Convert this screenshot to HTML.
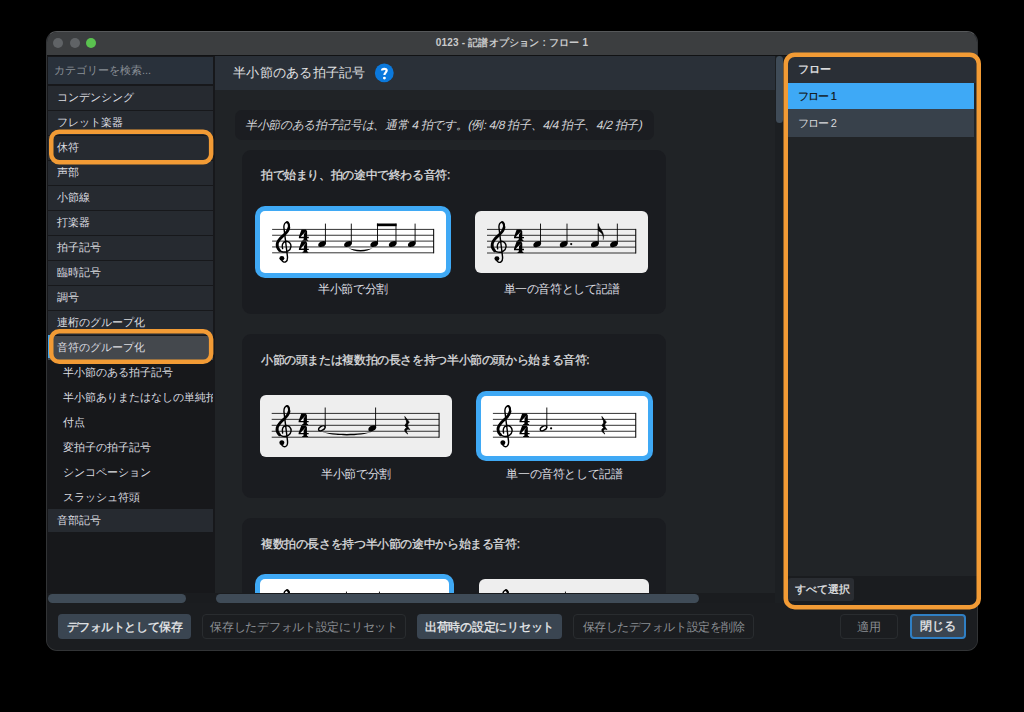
<!DOCTYPE html><html><head><meta charset="utf-8"><style>
*{margin:0;padding:0;box-sizing:border-box}
html,body{width:1024px;height:712px;background:#000;overflow:hidden;font-family:"Liberation Sans",sans-serif;}
.a{position:absolute;white-space:nowrap}
.t{white-space:nowrap}
</style></head><body>
<div class="a" style="left:46px;top:31px;width:932px;height:620px;background:#1b1d20;border-radius:11px;border:1px solid #323436;border-top-color:#56585a"></div>
<div class="a" style="left:47px;top:32px;width:930px;height:23px;background:#3c3e40;border-radius:10px 10px 0 0"></div>
<div class="a" style="left:47px;top:55px;width:930px;height:1px;background:#111214"></div>
<div class="a" style="left:53px;top:38px;width:10px;height:10px;background:#606366;border-radius:50%"></div>
<div class="a" style="left:70px;top:38px;width:10px;height:10px;background:#606366;border-radius:50%"></div>
<div class="a" style="left:86px;top:38px;width:10px;height:10px;background:#5ac24f;border-radius:50%"></div>
<div class="a" style="left:46px;top:36px;width:932px;height:14px;text-align:center;color:#c9cacb;font-size:10px;letter-spacing:0.18px;font-weight:bold;line-height:14px"><span class="t" style="--w:152.33px;">0123 - 記譜オプション : フロー 1</span></div>
<div class="a" style="left:47px;top:56px;width:168px;height:537px;background:#17181b"></div>
<div class="a" style="left:48px;top:57px;width:165px;height:27px;background:#29313b;color:#8a9097;font-size:11px;line-height:27px;padding-left:6px"><span class="t" style="--w:97.17px;">カテゴリーを検索...</span></div>
<div class="a" style="left:48px;top:86px;width:165px;height:24px;background:#262a30;color:#dcdde0;font-size:11px;line-height:23px;padding-left:9px"><span class="t" style="--w:77px;">コンデンシング</span></div>
<div class="a" style="left:48px;top:111px;width:165px;height:24px;background:#262a30;color:#dcdde0;font-size:11px;line-height:23px;padding-left:9px"><span class="t" style="--w:66px;">フレット楽器</span></div>
<div class="a" style="left:48px;top:136px;width:165px;height:24px;background:#262a30;color:#dcdde0;font-size:11px;line-height:23px;padding-left:9px"><span class="t" style="--w:22px;">休符</span></div>
<div class="a" style="left:48px;top:161px;width:165px;height:24px;background:#262a30;color:#dcdde0;font-size:11px;line-height:23px;padding-left:9px"><span class="t" style="--w:22px;">声部</span></div>
<div class="a" style="left:48px;top:186px;width:165px;height:24px;background:#262a30;color:#dcdde0;font-size:11px;line-height:23px;padding-left:9px"><span class="t" style="--w:33px;">小節線</span></div>
<div class="a" style="left:48px;top:211px;width:165px;height:24px;background:#262a30;color:#dcdde0;font-size:11px;line-height:23px;padding-left:9px"><span class="t" style="--w:33px;">打楽器</span></div>
<div class="a" style="left:48px;top:236px;width:165px;height:24px;background:#262a30;color:#dcdde0;font-size:11px;line-height:23px;padding-left:9px"><span class="t" style="--w:44px;">拍子記号</span></div>
<div class="a" style="left:48px;top:261px;width:165px;height:24px;background:#262a30;color:#dcdde0;font-size:11px;line-height:23px;padding-left:9px"><span class="t" style="--w:44px;">臨時記号</span></div>
<div class="a" style="left:48px;top:286px;width:165px;height:24px;background:#262a30;color:#dcdde0;font-size:11px;line-height:23px;padding-left:9px"><span class="t" style="--w:22px;">調号</span></div>
<div class="a" style="left:48px;top:311px;width:165px;height:24px;background:#262a30;color:#dcdde0;font-size:11px;line-height:23px;padding-left:9px"><span class="t" style="--w:88px;">連桁のグループ化</span></div>
<div class="a" style="left:48px;top:336px;width:165px;height:24px;background:#44484d;color:#dcdde0;font-size:11px;line-height:23px;padding-left:9px"><span class="t" style="--w:88px;">音符のグループ化</span></div>
<div class="a" style="left:48px;top:335px;width:2px;height:23px;background:#3fa9f5"></div>
<div class="a" style="left:48px;top:361px;width:165px;height:24px;color:#dcdde0;font-size:11px;line-height:23px;padding-left:15px;overflow:hidden"><span class="t" style="--w:110px;">半小節のある拍子記号</span></div>
<div class="a" style="left:48px;top:386px;width:165px;height:24px;color:#dcdde0;font-size:11px;line-height:23px;padding-left:15px;overflow:hidden"><span class="t" style="--w:165px;">半小節ありまたはなしの単純拍子</span></div>
<div class="a" style="left:48px;top:411px;width:165px;height:24px;color:#dcdde0;font-size:11px;line-height:23px;padding-left:15px;overflow:hidden"><span class="t" style="--w:22px;">付点</span></div>
<div class="a" style="left:48px;top:436px;width:165px;height:24px;color:#dcdde0;font-size:11px;line-height:23px;padding-left:15px;overflow:hidden"><span class="t" style="--w:88px;">変拍子の拍子記号</span></div>
<div class="a" style="left:48px;top:461px;width:165px;height:24px;color:#dcdde0;font-size:11px;line-height:23px;padding-left:15px;overflow:hidden"><span class="t" style="--w:88px;">シンコペーション</span></div>
<div class="a" style="left:48px;top:486px;width:165px;height:24px;color:#dcdde0;font-size:11px;line-height:23px;padding-left:15px;overflow:hidden"><span class="t" style="--w:77px;">スラッシュ符頭</span></div>
<div class="a" style="left:48px;top:509px;width:165px;height:23px;background:#262a30;color:#dcdde0;font-size:11px;line-height:23px;padding-left:9px"><span class="t" style="--w:44px;">音部記号</span></div>
<div class="a" style="left:215px;top:56px;width:561px;height:537px;background:#202326"></div>
<div class="a" style="left:215px;top:56px;width:561px;height:33.6px;background:#2a3038;color:#e0e1e3;font-size:13px;line-height:33px;padding-left:18px"><span class="t" style="--w:132.5px;">半小節のある拍子記号</span></div>
<svg class="a" style="left:370px;top:58px" width="30" height="30" viewBox="370 58 30 30"><circle cx="384.3" cy="72.9" r="9.4" fill="#0b79dd"/><path d="M 382.0 70.6 C 382.0 68.3, 386.7 68.1, 386.7 70.6 C 386.7 72.4, 384.4 72.6, 384.4 75.0" fill="none" stroke="#fff" stroke-width="2.2"/><circle cx="384.4" cy="78.1" r="1.45" fill="#fff"/></svg>
<div class="a" style="left:235px;top:109.5px;width:418.5px;height:30.5px;background:#1b1d21;border-radius:7px;color:#d4d5d8;font-size:12px;letter-spacing:-0.25px;line-height:30px;padding-left:11px"><span class="t" style="--w:403.0px;display:inline-block;transform:skewX(-12deg)">半小節のある拍子記号は、通常 4 拍です。(例: 4/8 拍子、4/4 拍子、4/2 拍子)</span></div>
<div class="a" style="left:242px;top:150px;width:424px;height:164px;background:#1a1c20;border-radius:9px"></div>
<div class="a" style="left:261px;top:167px;width:379px;height:16px;color:#e2e3e5;font-size:12px;-webkit-text-stroke:0.25px #d8d9db;letter-spacing:-0.38px;line-height:16px"><span class="t" style="--w:188.88px;">拍で始まり、拍の途中で終わる音符:</span></div>
<div class="a" style="left:242px;top:333.5px;width:424px;height:164.5px;background:#1a1c20;border-radius:9px"></div>
<div class="a" style="left:261px;top:352px;width:379px;height:16px;color:#e2e3e5;font-size:12px;-webkit-text-stroke:0.25px #d8d9db;letter-spacing:-0.38px;line-height:16px"><span class="t" style="--w:328.33px;">小節の頭または複数拍の長さを持つ半小節の頭から始まる音符:</span></div>
<div class="a" style="left:242px;top:517.5px;width:424px;height:82.5px;background:#1a1c20;border-radius:9px"></div>
<div class="a" style="left:261px;top:536px;width:379px;height:16px;color:#e2e3e5;font-size:12px;-webkit-text-stroke:0.25px #d8d9db;letter-spacing:-0.38px;line-height:16px"><span class="t" style="--w:258.61px;">複数拍の長さを持つ半小節の途中から始まる音符:</span></div>
<div class="a" style="left:255.25px;top:206.3px;width:195.65px;height:71.5px;background:#3fa9f5;border-radius:10px"></div>
<div class="a" style="left:260.25px;top:211.3px;width:185.65px;height:61.5px;background:#fff;border-radius:5px"></div>
<div class="a" style="left:475.25px;top:211.3px;width:172.75px;height:61.5px;background:#eeeeee;border-radius:6px"></div>
<div class="a" style="left:253px;top:281.4px;width:200px;height:16.0px;text-align:center;color:#dcdde0;font-size:12px;line-height:16px"><span class="t" style="--w:70px;">半小節で分割</span></div>
<div class="a" style="left:461.70000000000005px;top:281.4px;width:200.0px;height:16.0px;text-align:center;color:#dcdde0;font-size:12px;line-height:16px"><span class="t" style="--w:116px;">単一の音符として記譜</span></div>
<div class="a" style="left:260.1px;top:395px;width:191.5px;height:61.5px;background:#eeeeee;border-radius:6px"></div>
<div class="a" style="left:476px;top:390.8px;width:176.5px;height:70.6px;background:#3fa9f5;border-radius:10px"></div>
<div class="a" style="left:481px;top:395.8px;width:166.5px;height:60.6px;background:#fff;border-radius:5px"></div>
<div class="a" style="left:255.89999999999998px;top:465.8px;width:200.0px;height:16.0px;text-align:center;color:#dcdde0;font-size:12px;line-height:16px"><span class="t" style="--w:70px;">半小節で分割</span></div>
<div class="a" style="left:464.4px;top:465.8px;width:200.0px;height:16.0px;text-align:center;color:#dcdde0;font-size:12px;line-height:16px"><span class="t" style="--w:116px;">単一の音符として記譜</span></div>
<div class="a" style="left:255.2px;top:574.3px;width:198.4px;height:35.7px;background:#3fa9f5;border-radius:10px"></div>
<div class="a" style="left:260.2px;top:579.3px;width:188.4px;height:25.7px;background:#fff;border-radius:5px"></div>
<div class="a" style="left:478.7px;top:579.3px;width:169.9px;height:25.7px;background:#eeeeee;border-radius:6px"></div>
<svg class="a" style="left:0;top:0" width="1024" height="712" viewBox="0 0 1024 712"><defs><clipPath id="cc"><rect x="215" y="56" width="561" height="537"/></clipPath></defs><g clip-path="url(#cc)"><rect x="272.10" y="228.90" width="161.50" height="1" fill="#000" fill-opacity="0.8"/><rect x="272.10" y="234.75" width="161.50" height="1" fill="#000" fill-opacity="0.8"/><rect x="272.10" y="240.60" width="161.50" height="1" fill="#000" fill-opacity="0.8"/><rect x="272.10" y="246.45" width="161.50" height="1" fill="#000" fill-opacity="0.8"/><rect x="272.10" y="252.30" width="161.50" height="1" fill="#000" fill-opacity="0.8"/><rect x="433.00" y="228.90" width="1.2" height="24.40" fill="#000" fill-opacity="0.85"/><g transform="translate(276.60,246.95) scale(5.850)"><path d="M 1.03 0.29 C 0.85 -0.3, 1.1 -0.9, 1.54 -0.97 C 2.1 -1.05, 2.5 -0.55, 2.45 -0.05 C 2.4 0.6, 1.7 0.95, 1.09 0.86 C 0.4 0.75, 0.0 0.1, 0.06 -0.4 C 0.12 -1.0, 0.6 -1.5, 1.1 -1.95 C 1.7 -2.5, 2.2 -2.9, 2.17 -3.5 C 2.15 -4.0, 1.95 -4.3, 1.77 -4.28 C 1.45 -4.25, 1.2 -3.8, 1.25 -3.3 L 1.83 1.44 C 1.9 1.9, 1.95 2.3, 1.6 2.52 C 1.3 2.7, 0.95 2.5, 0.86 2.2" fill="none" stroke="#000" stroke-width="0.24" stroke-linecap="round"/><path d="M 0.5 0.6 C 0.1 0.2, 0.05 -0.3, 0.12 -0.6 C 0.3 -1.2, 0.7 -1.55, 1.15 -1.95 C 1.6 -2.35, 2.0 -2.7, 2.1 -3.3" fill="none" stroke="#000" stroke-width="0.48" stroke-linecap="round"/><path d="M 2.12 -3.4 C 2.1 -3.95, 1.95 -4.2, 1.78 -4.2" fill="none" stroke="#000" stroke-width="0.36" stroke-linecap="round"/><circle cx="0.9" cy="1.95" r="0.42" fill="#000"/></g><g transform="translate(298.90,229.40) scale(5.850)"><path d="M 0.45 0 L 1.2 0 L 1.4 0.32 L 1.4 1.27 L 1.69 1.27 L 1.69 1.5 L 1.4 1.5 L 1.4 1.72 L 1.6 1.84 L 1.6 1.96 L 0.6 1.96 L 0.6 1.84 L 0.82 1.72 L 0.82 1.5 L 0 1.5 L 0 1.27 Z" fill="#000"/><path d="M 1.22 0.32 L 0.84 0.85 L 0.84 1.26 L 0.3 1.26 Z" fill="#fff"/><g transform="translate(0,2.02)"><path d="M 0.45 0 L 1.2 0 L 1.4 0.32 L 1.4 1.27 L 1.69 1.27 L 1.69 1.5 L 1.4 1.5 L 1.4 1.72 L 1.6 1.84 L 1.6 1.96 L 0.6 1.96 L 0.6 1.84 L 0.82 1.72 L 0.82 1.5 L 0 1.5 L 0 1.27 Z" fill="#000"/><path d="M 1.22 0.32 L 0.84 0.85 L 0.84 1.26 L 0.3 1.26 Z" fill="#fff"/></g></g><ellipse cx="0" cy="0" rx="3.74" ry="2.92" transform="translate(322.10,244.03) skewX(-18) rotate(-14)" fill="#000"/><rect x="324.93" y="223.60" width="0.9" height="19.84" fill="#000"/><ellipse cx="0" cy="0" rx="3.74" ry="2.92" transform="translate(348.00,244.03) skewX(-18) rotate(-14)" fill="#000"/><rect x="350.83" y="223.60" width="0.9" height="19.84" fill="#000"/><ellipse cx="0" cy="0" rx="3.74" ry="2.92" transform="translate(374.25,244.03) skewX(-18) rotate(-14)" fill="#000"/><rect x="377.08" y="223.60" width="0.9" height="19.84" fill="#000"/><ellipse cx="0" cy="0" rx="3.74" ry="2.92" transform="translate(392.70,244.03) skewX(-18) rotate(-14)" fill="#000"/><rect x="395.53" y="223.60" width="0.9" height="19.84" fill="#000"/><ellipse cx="0" cy="0" rx="3.74" ry="2.92" transform="translate(411.80,244.03) skewX(-18) rotate(-14)" fill="#000"/><rect x="414.63" y="223.60" width="0.9" height="19.84" fill="#000"/><path d="M 376.9 223.5 L 396.6 223.5 L 396.6 226.2 L 376.9 226.2 Z" fill="#000"/><path d="M 348.30 247.80 C 353.69 252.60, 367.41 252.60, 372.80 247.80 C 367.41 250.60, 353.69 250.60, 348.30 247.80 Z" fill="#000"/><rect x="487.00" y="228.90" width="148.70" height="1" fill="#000" fill-opacity="0.8"/><rect x="487.00" y="234.80" width="148.70" height="1" fill="#000" fill-opacity="0.8"/><rect x="487.00" y="240.70" width="148.70" height="1" fill="#000" fill-opacity="0.8"/><rect x="487.00" y="246.60" width="148.70" height="1" fill="#000" fill-opacity="0.8"/><rect x="487.00" y="252.50" width="148.70" height="1" fill="#000" fill-opacity="0.8"/><rect x="635.10" y="228.90" width="1.2" height="24.60" fill="#000" fill-opacity="0.85"/><g transform="translate(491.60,247.10) scale(5.900)"><path d="M 1.03 0.29 C 0.85 -0.3, 1.1 -0.9, 1.54 -0.97 C 2.1 -1.05, 2.5 -0.55, 2.45 -0.05 C 2.4 0.6, 1.7 0.95, 1.09 0.86 C 0.4 0.75, 0.0 0.1, 0.06 -0.4 C 0.12 -1.0, 0.6 -1.5, 1.1 -1.95 C 1.7 -2.5, 2.2 -2.9, 2.17 -3.5 C 2.15 -4.0, 1.95 -4.3, 1.77 -4.28 C 1.45 -4.25, 1.2 -3.8, 1.25 -3.3 L 1.83 1.44 C 1.9 1.9, 1.95 2.3, 1.6 2.52 C 1.3 2.7, 0.95 2.5, 0.86 2.2" fill="none" stroke="#000" stroke-width="0.24" stroke-linecap="round"/><path d="M 0.5 0.6 C 0.1 0.2, 0.05 -0.3, 0.12 -0.6 C 0.3 -1.2, 0.7 -1.55, 1.15 -1.95 C 1.6 -2.35, 2.0 -2.7, 2.1 -3.3" fill="none" stroke="#000" stroke-width="0.48" stroke-linecap="round"/><path d="M 2.12 -3.4 C 2.1 -3.95, 1.95 -4.2, 1.78 -4.2" fill="none" stroke="#000" stroke-width="0.36" stroke-linecap="round"/><circle cx="0.9" cy="1.95" r="0.42" fill="#000"/></g><g transform="translate(514.00,229.40) scale(5.900)"><path d="M 0.45 0 L 1.2 0 L 1.4 0.32 L 1.4 1.27 L 1.69 1.27 L 1.69 1.5 L 1.4 1.5 L 1.4 1.72 L 1.6 1.84 L 1.6 1.96 L 0.6 1.96 L 0.6 1.84 L 0.82 1.72 L 0.82 1.5 L 0 1.5 L 0 1.27 Z" fill="#000"/><path d="M 1.22 0.32 L 0.84 0.85 L 0.84 1.26 L 0.3 1.26 Z" fill="#eeeeee"/><g transform="translate(0,2.02)"><path d="M 0.45 0 L 1.2 0 L 1.4 0.32 L 1.4 1.27 L 1.69 1.27 L 1.69 1.5 L 1.4 1.5 L 1.4 1.72 L 1.6 1.84 L 1.6 1.96 L 0.6 1.96 L 0.6 1.84 L 0.82 1.72 L 0.82 1.5 L 0 1.5 L 0 1.27 Z" fill="#000"/><path d="M 1.22 0.32 L 0.84 0.85 L 0.84 1.26 L 0.3 1.26 Z" fill="#eeeeee"/></g></g><ellipse cx="0" cy="0" rx="3.78" ry="2.95" transform="translate(537.25,244.15) skewX(-18) rotate(-14)" fill="#000"/><rect x="540.10" y="223.60" width="0.9" height="19.96" fill="#000"/><ellipse cx="0" cy="0" rx="3.78" ry="2.95" transform="translate(563.70,244.15) skewX(-18) rotate(-14)" fill="#000"/><rect x="566.55" y="223.60" width="0.9" height="19.96" fill="#000"/><ellipse cx="0" cy="0" rx="3.78" ry="2.95" transform="translate(594.90,244.15) skewX(-18) rotate(-14)" fill="#000"/><rect x="597.75" y="223.60" width="0.9" height="19.96" fill="#000"/><ellipse cx="0" cy="0" rx="3.78" ry="2.95" transform="translate(614.00,244.15) skewX(-18) rotate(-14)" fill="#000"/><rect x="616.85" y="223.60" width="0.9" height="19.96" fill="#000"/><circle cx="571.2" cy="244.1" r="1.1" fill="#000"/><path d="M 598.20 223.60 C 598.79 228.91, 605.58 231.27, 603.22 239.82 C 603.81 233.63, 599.68 231.56, 598.20 230.68 Z" fill="#000" stroke="#000" stroke-width="0.3"/><rect x="271.70" y="412.90" width="167.40" height="1" fill="#000" fill-opacity="0.8"/><rect x="271.70" y="418.85" width="167.40" height="1" fill="#000" fill-opacity="0.8"/><rect x="271.70" y="424.80" width="167.40" height="1" fill="#000" fill-opacity="0.8"/><rect x="271.70" y="430.75" width="167.40" height="1" fill="#000" fill-opacity="0.8"/><rect x="271.70" y="436.70" width="167.40" height="1" fill="#000" fill-opacity="0.8"/><rect x="438.50" y="412.90" width="1.2" height="24.80" fill="#000" fill-opacity="0.85"/><g transform="translate(276.50,431.25) scale(5.950)"><path d="M 1.03 0.29 C 0.85 -0.3, 1.1 -0.9, 1.54 -0.97 C 2.1 -1.05, 2.5 -0.55, 2.45 -0.05 C 2.4 0.6, 1.7 0.95, 1.09 0.86 C 0.4 0.75, 0.0 0.1, 0.06 -0.4 C 0.12 -1.0, 0.6 -1.5, 1.1 -1.95 C 1.7 -2.5, 2.2 -2.9, 2.17 -3.5 C 2.15 -4.0, 1.95 -4.3, 1.77 -4.28 C 1.45 -4.25, 1.2 -3.8, 1.25 -3.3 L 1.83 1.44 C 1.9 1.9, 1.95 2.3, 1.6 2.52 C 1.3 2.7, 0.95 2.5, 0.86 2.2" fill="none" stroke="#000" stroke-width="0.24" stroke-linecap="round"/><path d="M 0.5 0.6 C 0.1 0.2, 0.05 -0.3, 0.12 -0.6 C 0.3 -1.2, 0.7 -1.55, 1.15 -1.95 C 1.6 -2.35, 2.0 -2.7, 2.1 -3.3" fill="none" stroke="#000" stroke-width="0.48" stroke-linecap="round"/><path d="M 2.12 -3.4 C 2.1 -3.95, 1.95 -4.2, 1.78 -4.2" fill="none" stroke="#000" stroke-width="0.36" stroke-linecap="round"/><circle cx="0.9" cy="1.95" r="0.42" fill="#000"/></g><g transform="translate(298.60,413.40) scale(5.950)"><path d="M 0.45 0 L 1.2 0 L 1.4 0.32 L 1.4 1.27 L 1.69 1.27 L 1.69 1.5 L 1.4 1.5 L 1.4 1.72 L 1.6 1.84 L 1.6 1.96 L 0.6 1.96 L 0.6 1.84 L 0.82 1.72 L 0.82 1.5 L 0 1.5 L 0 1.27 Z" fill="#000"/><path d="M 1.22 0.32 L 0.84 0.85 L 0.84 1.26 L 0.3 1.26 Z" fill="#eeeeee"/><g transform="translate(0,2.02)"><path d="M 0.45 0 L 1.2 0 L 1.4 0.32 L 1.4 1.27 L 1.69 1.27 L 1.69 1.5 L 1.4 1.5 L 1.4 1.72 L 1.6 1.84 L 1.6 1.96 L 0.6 1.96 L 0.6 1.84 L 0.82 1.72 L 0.82 1.5 L 0 1.5 L 0 1.27 Z" fill="#000"/><path d="M 1.22 0.32 L 0.84 0.85 L 0.84 1.26 L 0.3 1.26 Z" fill="#eeeeee"/></g></g><ellipse cx="0" cy="0" rx="3.81" ry="2.98" transform="translate(321.85,428.27) skewX(-18) rotate(-14)" fill="#000"/><ellipse cx="321.85" cy="428.27" rx="2.98" ry="1.25" transform="rotate(-32 321.85 428.27)" fill="#eeeeee"/><rect x="324.73" y="407.50" width="0.9" height="20.18" fill="#000"/><ellipse cx="0" cy="0" rx="3.81" ry="2.98" transform="translate(372.30,428.27) skewX(-18) rotate(-14)" fill="#000"/><rect x="375.18" y="407.50" width="0.9" height="20.18" fill="#000"/><path d="M 321.80 431.80 C 332.84 436.60, 360.96 436.60, 372.00 431.80 C 360.96 434.60, 332.84 434.60, 321.80 431.80 Z" fill="#000"/><g transform="translate(404.20,416.50) scale(5.950)"><path d="M 0.1 0 L 0.85 0.95 C 0.55 1.25, 0.45 1.55, 0.8 2.0 L 0.95 2.2 C 0.5 2.0, 0.2 2.2, 0.45 2.7 L 0.6 2.95 C 0.0 2.6, -0.1 2.0, 0.45 1.95 L 0.1 1.5 C 0.45 1.15, 0.5 0.8, 0.2 0.4 Z" fill="#000" stroke="#000" stroke-width="0.12"/></g><rect x="492.90" y="412.90" width="142.80" height="1" fill="#000" fill-opacity="0.8"/><rect x="492.90" y="418.85" width="142.80" height="1" fill="#000" fill-opacity="0.8"/><rect x="492.90" y="424.80" width="142.80" height="1" fill="#000" fill-opacity="0.8"/><rect x="492.90" y="430.75" width="142.80" height="1" fill="#000" fill-opacity="0.8"/><rect x="492.90" y="436.70" width="142.80" height="1" fill="#000" fill-opacity="0.8"/><rect x="635.10" y="412.90" width="1.2" height="24.80" fill="#000" fill-opacity="0.85"/><g transform="translate(497.50,431.25) scale(5.950)"><path d="M 1.03 0.29 C 0.85 -0.3, 1.1 -0.9, 1.54 -0.97 C 2.1 -1.05, 2.5 -0.55, 2.45 -0.05 C 2.4 0.6, 1.7 0.95, 1.09 0.86 C 0.4 0.75, 0.0 0.1, 0.06 -0.4 C 0.12 -1.0, 0.6 -1.5, 1.1 -1.95 C 1.7 -2.5, 2.2 -2.9, 2.17 -3.5 C 2.15 -4.0, 1.95 -4.3, 1.77 -4.28 C 1.45 -4.25, 1.2 -3.8, 1.25 -3.3 L 1.83 1.44 C 1.9 1.9, 1.95 2.3, 1.6 2.52 C 1.3 2.7, 0.95 2.5, 0.86 2.2" fill="none" stroke="#000" stroke-width="0.24" stroke-linecap="round"/><path d="M 0.5 0.6 C 0.1 0.2, 0.05 -0.3, 0.12 -0.6 C 0.3 -1.2, 0.7 -1.55, 1.15 -1.95 C 1.6 -2.35, 2.0 -2.7, 2.1 -3.3" fill="none" stroke="#000" stroke-width="0.48" stroke-linecap="round"/><path d="M 2.12 -3.4 C 2.1 -3.95, 1.95 -4.2, 1.78 -4.2" fill="none" stroke="#000" stroke-width="0.36" stroke-linecap="round"/><circle cx="0.9" cy="1.95" r="0.42" fill="#000"/></g><g transform="translate(519.50,413.40) scale(5.950)"><path d="M 0.45 0 L 1.2 0 L 1.4 0.32 L 1.4 1.27 L 1.69 1.27 L 1.69 1.5 L 1.4 1.5 L 1.4 1.72 L 1.6 1.84 L 1.6 1.96 L 0.6 1.96 L 0.6 1.84 L 0.82 1.72 L 0.82 1.5 L 0 1.5 L 0 1.27 Z" fill="#000"/><path d="M 1.22 0.32 L 0.84 0.85 L 0.84 1.26 L 0.3 1.26 Z" fill="#fff"/><g transform="translate(0,2.02)"><path d="M 0.45 0 L 1.2 0 L 1.4 0.32 L 1.4 1.27 L 1.69 1.27 L 1.69 1.5 L 1.4 1.5 L 1.4 1.72 L 1.6 1.84 L 1.6 1.96 L 0.6 1.96 L 0.6 1.84 L 0.82 1.72 L 0.82 1.5 L 0 1.5 L 0 1.27 Z" fill="#000"/><path d="M 1.22 0.32 L 0.84 0.85 L 0.84 1.26 L 0.3 1.26 Z" fill="#fff"/></g></g><ellipse cx="0" cy="0" rx="3.81" ry="2.98" transform="translate(543.50,428.27) skewX(-18) rotate(-14)" fill="#000"/><ellipse cx="543.50" cy="428.27" rx="2.98" ry="1.25" transform="rotate(-32 543.50 428.27)" fill="#fff"/><rect x="546.38" y="407.50" width="0.9" height="20.18" fill="#000"/><circle cx="551.1" cy="428.3" r="1.1" fill="#000"/><g transform="translate(601.30,416.50) scale(5.950)"><path d="M 0.1 0 L 0.85 0.95 C 0.55 1.25, 0.45 1.55, 0.8 2.0 L 0.95 2.2 C 0.5 2.0, 0.2 2.2, 0.45 2.7 L 0.6 2.95 C 0.0 2.6, -0.1 2.0, 0.45 1.95 L 0.1 1.5 C 0.45 1.15, 0.5 0.8, 0.2 0.4 Z" fill="#000" stroke="#000" stroke-width="0.12"/></g><g transform="translate(276.60,615.10) scale(5.900)"><path d="M 1.03 0.29 C 0.85 -0.3, 1.1 -0.9, 1.54 -0.97 C 2.1 -1.05, 2.5 -0.55, 2.45 -0.05 C 2.4 0.6, 1.7 0.95, 1.09 0.86 C 0.4 0.75, 0.0 0.1, 0.06 -0.4 C 0.12 -1.0, 0.6 -1.5, 1.1 -1.95 C 1.7 -2.5, 2.2 -2.9, 2.17 -3.5 C 2.15 -4.0, 1.95 -4.3, 1.77 -4.28 C 1.45 -4.25, 1.2 -3.8, 1.25 -3.3 L 1.83 1.44 C 1.9 1.9, 1.95 2.3, 1.6 2.52 C 1.3 2.7, 0.95 2.5, 0.86 2.2" fill="none" stroke="#000" stroke-width="0.24" stroke-linecap="round"/><path d="M 0.5 0.6 C 0.1 0.2, 0.05 -0.3, 0.12 -0.6 C 0.3 -1.2, 0.7 -1.55, 1.15 -1.95 C 1.6 -2.35, 2.0 -2.7, 2.1 -3.3" fill="none" stroke="#000" stroke-width="0.48" stroke-linecap="round"/><path d="M 2.12 -3.4 C 2.1 -3.95, 1.95 -4.2, 1.78 -4.2" fill="none" stroke="#000" stroke-width="0.36" stroke-linecap="round"/><circle cx="0.9" cy="1.95" r="0.42" fill="#000"/></g><g transform="translate(495.50,615.10) scale(5.900)"><path d="M 1.03 0.29 C 0.85 -0.3, 1.1 -0.9, 1.54 -0.97 C 2.1 -1.05, 2.5 -0.55, 2.45 -0.05 C 2.4 0.6, 1.7 0.95, 1.09 0.86 C 0.4 0.75, 0.0 0.1, 0.06 -0.4 C 0.12 -1.0, 0.6 -1.5, 1.1 -1.95 C 1.7 -2.5, 2.2 -2.9, 2.17 -3.5 C 2.15 -4.0, 1.95 -4.3, 1.77 -4.28 C 1.45 -4.25, 1.2 -3.8, 1.25 -3.3 L 1.83 1.44 C 1.9 1.9, 1.95 2.3, 1.6 2.52 C 1.3 2.7, 0.95 2.5, 0.86 2.2" fill="none" stroke="#000" stroke-width="0.24" stroke-linecap="round"/><path d="M 0.5 0.6 C 0.1 0.2, 0.05 -0.3, 0.12 -0.6 C 0.3 -1.2, 0.7 -1.55, 1.15 -1.95 C 1.6 -2.35, 2.0 -2.7, 2.1 -3.3" fill="none" stroke="#000" stroke-width="0.48" stroke-linecap="round"/><path d="M 2.12 -3.4 C 2.1 -3.95, 1.95 -4.2, 1.78 -4.2" fill="none" stroke="#000" stroke-width="0.36" stroke-linecap="round"/><circle cx="0.9" cy="1.95" r="0.42" fill="#000"/></g><rect x="345.95" y="591.60" width="0.9" height="8.40" fill="#000"/><rect x="378.95" y="591.60" width="0.9" height="8.40" fill="#000"/><rect x="564.95" y="591.60" width="0.9" height="8.40" fill="#000"/></g></svg>
<div class="a" style="left:215px;top:593px;width:561px;height:10px;background:#1a1c1f"></div>
<div class="a" style="left:216px;top:594px;width:483px;height:9px;background:#3f4b57;border-radius:5px"></div>
<div class="a" style="left:47px;top:593px;width:168px;height:10px;background:#1a1c1f"></div>
<div class="a" style="left:48px;top:594px;width:138px;height:9px;background:#3f4b57;border-radius:5px"></div>
<div class="a" style="left:775px;top:56px;width:9px;height:547px;background:#1c1f22"></div>
<div class="a" style="left:776px;top:56px;width:7px;height:67px;background:#3f4b57;border-radius:4px"></div>
<div class="a" style="left:47px;top:603px;width:930px;height:47px;background:#1b1d20;border-radius:0 0 10px 10px"></div>
<div class="a" style="left:786px;top:56px;width:191px;height:550px;background:#212427;border-radius:8px;overflow:hidden"></div>
<div class="a" style="left:788px;top:56px;width:188px;height:27px;background:#2a2f36;color:#e6e7e9;font-size:11px;-webkit-text-stroke:0.3px #e6e7e9;line-height:27px;padding-left:10px"><span class="t" style="--w:33px;">フロー</span></div>
<div class="a" style="left:788px;top:83px;width:186px;height:26px;background:#3ea9f6;color:#111;font-size:11px;-webkit-text-stroke:0.2px #111;letter-spacing:-0.8px;line-height:26px;padding-left:10px"><span class="t" style="--w:38.19px;">フロー 1</span></div>
<div class="a" style="left:788px;top:109px;width:186px;height:28px;background:#38414b;color:#d8d9dc;font-size:11px;letter-spacing:-0.8px;line-height:28px;padding-left:10px"><span class="t" style="--w:38.19px;">フロー 2</span></div>
<div class="a" style="left:786px;top:576px;width:191px;height:30px;background:#1a1c1f"></div>
<div class="a" style="left:788px;top:578px;width:66px;height:23px;background:#2a2d32;border-radius:3px;color:#e6e7e9;font-size:11px;-webkit-text-stroke:0.25px #e6e7e9;line-height:23px;padding-left:7px"><span class="t" style="--w:55px;">すべて選択</span></div>
<svg class="a" style="left:0;top:0" width="1024" height="712"><rect x="51.25" y="131.65" width="159.9" height="30.6" rx="8" fill="none" stroke="#f29b35" stroke-width="4.5"/><rect x="51.25" y="331.35" width="159.9" height="30.5" rx="8" fill="none" stroke="#f29b35" stroke-width="4.5"/><rect x="785.75" y="54.75" width="193" height="552.4" rx="9" fill="none" stroke="#f29b35" stroke-width="4.5"/></svg>
<div class="a" style="left:58px;top:614px;width:133px;height:25px;background:#3a4551;border-radius:4px;color:#e9eaec;font-size:12px;-webkit-text-stroke:0.3px #e9eaec;letter-spacing:-0.45px;line-height:26px;text-align:center"><span class="t" style="--w:115.52px;">デフォルトとして保存</span></div>
<div class="a" style="left:202px;top:614px;width:204px;height:25px;background:#1b1d20;border:1px solid #292c2f;border-radius:4px;color:#8b8f94;font-size:12px;letter-spacing:-0.45px;line-height:24px;text-align:center"><span class="t" style="--w:187.5px;">保存したデフォルト設定にリセット</span></div>
<div class="a" style="left:417px;top:614px;width:145px;height:25px;background:#3a4551;border-radius:4px;color:#e9eaec;font-size:12px;-webkit-text-stroke:0.3px #e9eaec;letter-spacing:-0.45px;line-height:26px;text-align:center"><span class="t" style="--w:129.0px;">出荷時の設定にリセット</span></div>
<div class="a" style="left:573px;top:614px;width:181px;height:25px;background:#1b1d20;border:1px solid #292c2f;border-radius:4px;color:#8b8f94;font-size:12px;letter-spacing:-0.45px;line-height:24px;text-align:center"><span class="t" style="--w:161.7px;">保存したデフォルト設定を削除</span></div>
<div class="a" style="left:840px;top:614px;width:58px;height:25px;background:#1b1d20;border:1px solid #292c2f;border-radius:4px;color:#8b8f94;font-size:12px;letter-spacing:-0.45px;line-height:24px;text-align:center"><span class="t" style="--w:23.11px;">適用</span></div>
<div class="a" style="left:910px;top:614px;width:56px;height:25px;background:#3a4551;border:2px solid #2f7fc4;border-radius:4px;color:#e9eaec;font-size:12px;-webkit-text-stroke:0.3px #e9eaec;letter-spacing:-0.3px;line-height:21px;text-align:center"><span class="t" style="--w:35.11px;">閉じる</span></div>
<script>
(function(){var ss=document.querySelectorAll('span.t');for(var i=0;i<ss.length;i++){var e=ss[i];var w=parseFloat(getComputedStyle(e).getPropertyValue('--w'));if(!w)continue;var c=e.getBoundingClientRect().width;var n=e.textContent.length;if(Math.abs(c-w)>0.75&&n>1){var ls=parseFloat(getComputedStyle(e).letterSpacing)||0;e.style.letterSpacing=(ls+(w-c)/n)+'px';}}})();
</script>
</body></html>
